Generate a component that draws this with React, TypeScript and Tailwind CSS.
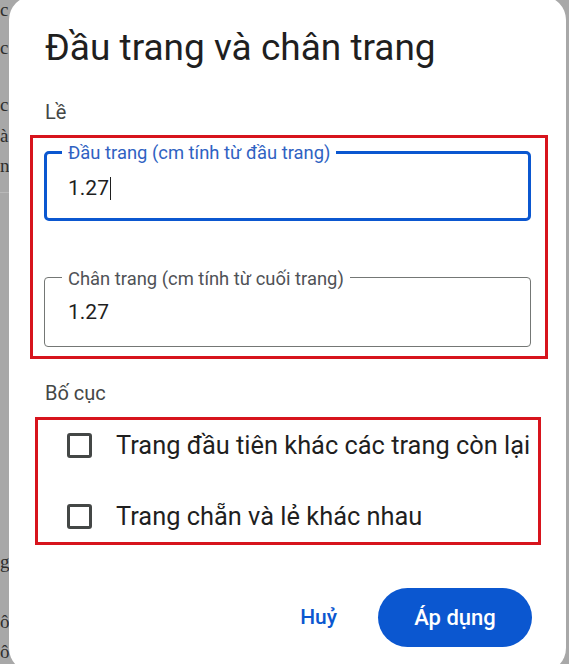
import React from 'react'

function DocGlyph({ text, className }: { text: string; className: string }) {
  return <div className={`h-[20px] w-[9px] leading-[20px] ${className}`}>{text}</div>
}

function Checkbox({ label }: { label: string }) {
  return (
    <label className="flex h-[32px] items-center gap-[24px]">
      <span className="h-[25px] w-[25px] shrink-0 rounded-[3px] border-[3px] border-[#444746]" />
      <span className="whitespace-nowrap text-[25.4px] leading-[32px] text-[#1f1f1f]">{label}</span>
    </label>
  )
}

export default function App() {
  return (
    <div className="relative h-[664px] w-[569px] overflow-hidden bg-[#a8a8a8] font-['Roboto',sans-serif]">
      {/* document behind the scrim, only its edge shows */}
      <div className="flex flex-col font-['Liberation_Serif',serif] text-[19px] text-[#2e2e2e]">
        <DocGlyph text="c" className="mt-0" />
        <DocGlyph text="c" className="mt-[18px]" />
        <DocGlyph text="c" className="mt-[37px]" />
        <DocGlyph text="à" className="mt-[11px]" />
        <DocGlyph text="n" className="mt-[10px]" />
        <div className="mt-[16px] h-px w-[9px] bg-[#b9b9b9]" />
        <DocGlyph text="g" className="mt-[359px]" />
        <DocGlyph text="ô" className="mt-[40px]" />
        <DocGlyph text="ô" className="mt-[10px]" />
      </div>

      {/* dialog */}
      <div className="absolute left-[9px] top-[-4px] flex h-[676px] w-[557px] flex-col rounded-[24px] bg-white px-[35px] pt-[30px]">
        <h1 className="pl-px text-[37px] font-normal leading-[44px] text-[#1f1f1f]">Đầu trang và chân trang</h1>

        <div className="mt-[30px] pl-px text-[20px] leading-[24px] text-[#444746]">Lề</div>

        <div className="-ml-[14px] -mr-[17px] mt-[11px] border-[3px] border-[#d7141d] pb-[9px] pl-[11px] pr-[14px] pt-[13px]">
          <div className="relative h-[70px] rounded-[5px] border-[3px] border-[#0b57d0] pl-[21px] pt-[22px]">
            <span className="absolute left-[15px] top-[-10px] whitespace-nowrap bg-white px-[6px] text-[18.4px] leading-[18px] text-[#2f62c2]">
              Đầu trang (cm tính từ đầu trang)
            </span>
            <div className="flex items-center text-[21px] leading-[24px] text-[#1f1f1f]">
              1.27
              <span className="ml-px inline-block h-[23px] w-px bg-[#1f1f1f]" />
            </div>
          </div>

          <div className="relative mt-[56px] h-[70px] rounded-[4px] border border-[#747775] pl-[23px] pt-[22px]">
            <span className="absolute left-[17px] top-[-8px] whitespace-nowrap bg-white px-[6px] text-[18.4px] leading-[18px] text-[#4f5256]">
              Chân trang (cm tính từ cuối trang)
            </span>
            <div className="text-[21px] leading-[24px] text-[#1f1f1f]">1.27</div>
          </div>
        </div>

        <div className="mt-[22px] pl-px text-[20px] leading-[24px] text-[#444746]">Bố cục</div>

        <div className="-ml-[9px] -mr-[10px] mt-[12px] flex flex-col gap-[39px] border-[3px] border-[#d7141d] pb-[10px] pl-[29px] pt-[9px]">
          <Checkbox label="Trang đầu tiên khác các trang còn lại" />
          <Checkbox label="Trang chẵn và lẻ khác nhau" />
        </div>

        <div className="-mr-px mt-[43px] flex items-center justify-end gap-[41px]">
          <button className="text-[21px] font-medium text-[#0b57d0]">Huỷ</button>
          <button className="flex h-[59px] w-[154px] items-center justify-center rounded-full bg-[#0b57d0] text-[22px] font-medium text-white">
            Áp dụng
          </button>
        </div>
      </div>
    </div>
  )
}
